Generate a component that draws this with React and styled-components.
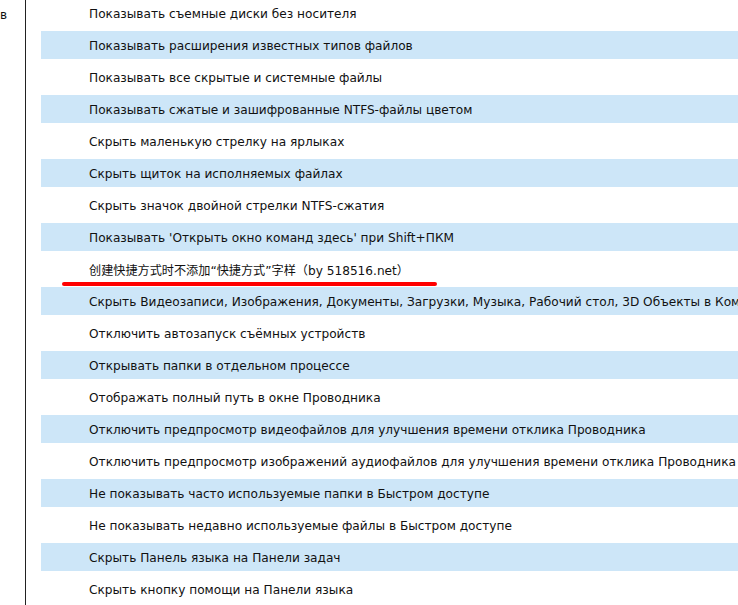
import React from "react";
import styled, { createGlobalStyle } from "styled-components";

const GlobalStyle = createGlobalStyle`
  html, body {
    margin: 0;
    padding: 0;
    background: #ffffff;
    overflow: hidden;
  }
  body {
    font-family: "DejaVu Sans", Verdana, "Noto Sans CJK SC", sans-serif;
    color: #111;
  }
`;

const Page = styled.div`
  display: flex;
  width: 738px;
  height: 605px;
  overflow: hidden;
`;

const SideNav = styled.div`
  width: 25px;
  flex: none;
  border-right: 1px solid #222;
  font-size: 12px;
  line-height: 14px;
  padding-top: 8px;
  overflow: hidden;
  white-space: nowrap;
`;

const Content = styled.div`
  position: relative;
  flex: 1;
  min-width: 0;
  padding-left: 15px;
`;

const List = styled.div`
  display: flex;
  flex-direction: column;
  gap: 4px;
  margin-top: -1px;
`;

const Row = styled.div`
  height: 28px;
  box-sizing: border-box;
  padding-top: 1px;
  display: flex;
  align-items: center;
  padding-left: 48px;
  width: 820px;
  background: ${({ $shaded }) => ($shaded ? "#cde6f8" : "transparent")};
  font-size: 12.15px;
  white-space: nowrap;
`;

const Underline = styled.div`
  position: absolute;
  left: 36px;
  top: 282px;
  width: 375px;
  height: 4px;
  border-radius: 2px;
  background: #ff0000;
`;

const items = [
  "Показывать съемные диски без носителя",
  "Показывать расширения известных типов файлов",
  "Показывать все скрытые и системные файлы",
  "Показывать сжатые и зашифрованные NTFS-файлы цветом",
  "Скрыть маленькую стрелку на ярлыках",
  "Скрыть щиток на исполняемых файлах",
  "Скрыть значок двойной стрелки NTFS-сжатия",
  "Показывать 'Открыть окно команд здесь' при Shift+ПКМ",
  "创建快捷方式时不添加“快捷方式”字样（by 518516.net）",
  "Скрыть Видеозаписи, Изображения, Документы, Загрузки, Музыка, Рабочий стол, 3D Объекты в Компьютере",
  "Отключить автозапуск съёмных устройств",
  "Открывать папки в отдельном процессе",
  "Отображать полный путь в окне Проводника",
  "Отключить предпросмотр видеофайлов для улучшения времени отклика Проводника",
  "Отключить предпросмотр изображений аудиофайлов для улучшения времени отклика Проводника",
  "Не показывать часто используемые папки в Быстром доступе",
  "Не показывать недавно используемые файлы в Быстром доступе",
  "Скрыть Панель языка на Панели задач",
  "Скрыть кнопку помощи на Панели языка",
];

export default function App() {
  return (
    <>
      <GlobalStyle />
      <Page>
        <SideNav>в</SideNav>
        <Content>
          <List>
            {items.map((text, i) => (
              <Row key={i} $shaded={i % 2 === 1}>
                {text}
              </Row>
            ))}
          </List>
          <Underline />
        </Content>
      </Page>
    </>
  );
}
